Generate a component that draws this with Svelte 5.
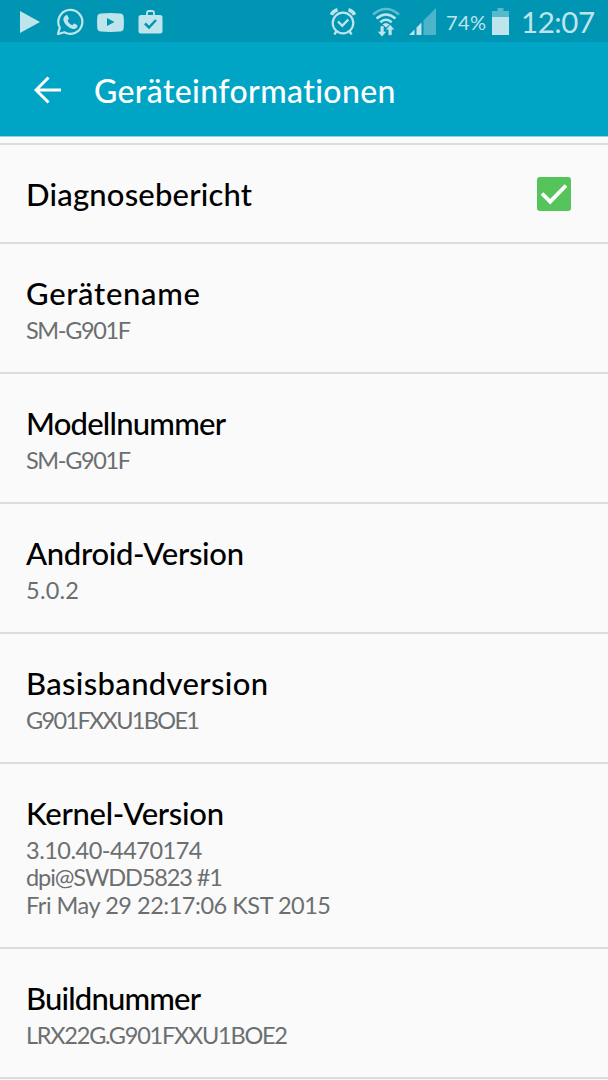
<script lang="ts">
  type Line = { text: string; width: number };
  type Entry = { title: string; width: number; lines: Line[] };

  const entries: Entry[] = [
    { title: "Gerätename", width: 174, lines: [{ text: "SM-G901F", width: 105 }] },
    { title: "Modellnummer", width: 200, lines: [{ text: "SM-G901F", width: 105 }] },
    { title: "Android-Version", width: 218, lines: [{ text: "5.0.2", width: 53 }] },
    { title: "Basisbandversion", width: 242, lines: [{ text: "G901FXXU1BOE1", width: 174 }] },
    {
      title: "Kernel-Version",
      width: 198,
      lines: [
        { text: "3.10.40-4470174", width: 176.5 },
        { text: "dpi@SWDD5823 #1", width: 197 },
        { text: "Fri May 29 22:17:06 KST 2015", width: 305 },
      ],
    },
    { title: "Buildnummer", width: 175, lines: [{ text: "LRX22G.G901FXXU1BOE2", width: 262 }] },
  ];

  let diagnostics = $state(true);

  // Tracks a label so that it fills the given width
  function fit(node: HTMLElement, width: number) {
    const natural = node.getBoundingClientRect().width;
    const gaps = (node.textContent ?? "").length - 1;
    node.style.letterSpacing = `${(width - natural) / gaps}px`;
  }
</script>

<div class="screen">
  <div class="statusbar">
    <div class="notifications">
      <svg width="20" height="24" viewBox="0 0 20 24"><path d="M0 1 20 12 0 23z" fill="currentColor" /></svg>
      <svg class="whatsapp" width="28" height="28" viewBox="0 0 28 28">
        <path d="M2 26l1.8-6.4A12 12 0 1 1 8.4 24.300z" fill="none" stroke="currentColor" stroke-width="2.200" stroke-linejoin="round" />
        <path d="M9.700 7.500c.6-.6 1.500-.6 1.900.2l1.200 2.600c.2.5 0 1-1.300 2.400 1.100 2.100 2.700 3.600 4.900 4.500 1.200-1.400 1.500-1.900 2.100-1.600l2.600 1.300c.7.3.5 1.700-.1 2.600-1 1.400-3 1.900-5 1.200-4-1.300-6.800-4-8.300-7.500-.9-2.200-.1-4.600 2-5.700z" fill="currentColor" />
      </svg>
      <svg class="youtube" width="27" height="19" viewBox="0 0 27 19">
        <path fill-rule="evenodd" d="M4 .5Q13.500-.3 23 .5q3.500.3 3.700 3.500.4 5.500 0 11-.2 3.200-3.700 3.500-9.500.8-19 0Q.500 18.200.3 15-.1 9.500.3 4 .5.8 4 .5zM10 5v8l7.500-4z" fill="currentColor" />
      </svg>
      <svg class="bag" width="25" height="24" viewBox="0 0 25 24">
        <path d="M9 5V3q0-2 2-2h3q2 0 2 2v2" fill="none" stroke="currentColor" stroke-width="1.800" />
        <rect x=".5" y="5" width="24" height="18.500" rx="2.500" fill="currentColor" />
        <path d="m7 13.500 4 4 7-7.500" fill="none" stroke="#0095b3" stroke-width="2.500" />
      </svg>
    </div>
    <div class="system">
      <svg class="alarm" width="26" height="28" viewBox="0 0 26 28">
        <g fill="none" stroke="currentColor">
          <circle cx="13" cy="15" r="10.300" stroke-width="2.200" />
          <path d="m8 13.500 4.300 4.300 6-6.300" stroke-width="2.400" />
          <path d="M6.500 23 4.500 26.500M19.500 23l2 3.500" stroke-width="2.500" />
          <path d="M1.500 6.800Q3 3 7.500 1.800M24.500 6.800Q23 3 18.500 1.800" stroke-width="3.500" />
        </g>
      </svg>
      <svg class="wifi" width="28" height="30" viewBox="0 0 28 30">
        <g fill="none" stroke="currentColor" stroke-width="2.500">
          <path d="M1 7.500Q14-3.500 27 7.500" opacity=".5" />
          <path d="M4.500 11.500q9.500-8 19 0M8.300 15.300q5.700-5 11.400 0" />
        </g>
        <path d="M10.500 17.500q3.500-3 7 0l-3.500 3z" fill="currentColor" />
        <path d="M8.300 19h3.600v5.500h2.600L10 29.800l-4.500-5.300h2.800zM16.300 28.300v-5.500h-2.600l4.400-5.300 4.500 5.300h-2.700v5.500z" fill="currentColor" stroke="#0095b3" stroke-width=".4" />
      </svg>
      <svg class="signal" width="27" height="27" viewBox="0 0 27 27">
        <path d="M14.500 12.500 27 0v27H14.500z" fill="currentColor" opacity=".4" />
        <path d="M0 27l5.500-5.500V27zM7.500 19.500l5-5V27h-5z" fill="currentColor" />
      </svg>
      <span class="percent"><span use:fit={40}>74%</span></span>
      <svg class="battery" width="17" height="27" viewBox="0 0 17 27">
        <path d="M0 3h5.500V0h6v3H17v6H0z" fill="currentColor" opacity=".45" />
        <path d="M0 9h17v18H0z" fill="currentColor" />
      </svg>
      <span class="clock"><span use:fit={74}>12:07</span></span>
    </div>
  </div>

  <header>
    <button type="button" aria-label="Zurück">
      <svg width="28" height="28" viewBox="0 0 28 28">
        <path d="M14.500 1.500 2 14l12.500 12.500M2 14h25" fill="none" stroke="#fff" stroke-width="3" />
      </svg>
    </button>
    <h1><span use:fit={302}>Geräteinformationen</span></h1>
  </header>

  <main>
    <label class="item toggle">
      <span class="title"><span use:fit={226}>Diagnosebericht</span></span>
      <input type="checkbox" bind:checked={diagnostics} />
      <span class="box">
        {#if diagnostics}
          <svg width="34" height="34" viewBox="0 0 34 34">
            <path d="m5 16.500 8.200 8.200L29 8.500" fill="none" stroke="#fff" stroke-width="3.800" />
          </svg>
        {/if}
      </span>
    </label>
    {#each entries as entry}
      <section class="item">
        <div class="title"><span use:fit={entry.width}>{entry.title}</span></div>
        {#each entry.lines as line}
          <div class="line"><span use:fit={line.width}>{line.text}</span></div>
        {/each}
      </section>
    {/each}
  </main>
</div>

<style>
  :global(body) {
    background: #fafafa;
  }

  .screen {
    height: 1080px;
    overflow: hidden;
    font-family: Lato, "Open Sans", sans-serif;
    color: #000;
    background: #fafafa;
    white-space: nowrap;
  }

  .screen svg {
    display: block;
    flex: none;
  }

  .statusbar {
    height: 42px;
    display: flex;
    justify-content: space-between;
    box-sizing: border-box;
    padding: 0 13px 0 20px;
    color: #bfe5ec;
    background: #0095b3;
  }

  .notifications,
  .system {
    display: flex;
    align-items: center;
    height: 44px;
  }

  .system {
    height: 43px;
  }

  .whatsapp {
    margin-left: 16px;
  }

  .youtube {
    margin-left: 13px;
  }

  .bag {
    margin-left: 14px;
  }

  .wifi {
    margin-left: 16px;
  }

  .signal {
    margin-left: 9px;
  }

  .percent {
    width: 39px;
    margin-left: 10px;
    font-size: 20px;
  }

  .battery {
    margin-left: 7px;
  }

  .clock {
    width: 74px;
    margin-left: 12px;
    font-size: 29.5px;
    line-height: 36px;
  }

  header {
    height: 94px;
    display: flex;
    align-items: center;
    box-sizing: border-box;
    padding: 2px 34px 0;
    color: #fff;
    background: #00a5c6;
  }

  header button {
    padding: 0;
    border: 0;
    background: transparent;
  }

  h1 {
    margin: 2px 0 0 32px;
    font-size: 32px;
    font-weight: 500;
    line-height: 40px;
  }

  main {
    padding-top: 6px;
    border-top: 1px solid #8fd4e3;
  }

  .item {
    display: block;
    padding: 31px 26px 28px;
    border-top: 2px solid #dcdcdc;
  }

  .item:last-child {
    border-bottom: 2px solid #dcdcdc;
  }

  .toggle {
    display: flex;
    align-items: center;
    justify-content: space-between;
    height: 97px;
    padding-top: 0;
    padding-bottom: 0;
    padding-right: 37px;
  }

  .toggle input {
    position: absolute;
    opacity: 0;
  }

  .title {
    font-size: 31px;
    font-weight: 500;
    line-height: 36px;
  }

  .line {
    font-size: 23.5px;
    line-height: 27.5px;
    color: #6b6f70;
  }

  .title + .line {
    margin-top: 5.5px;
  }

  .box {
    width: 34px;
    height: 34px;
    border-radius: 3px;
    background: #55c45a;
  }
</style>
